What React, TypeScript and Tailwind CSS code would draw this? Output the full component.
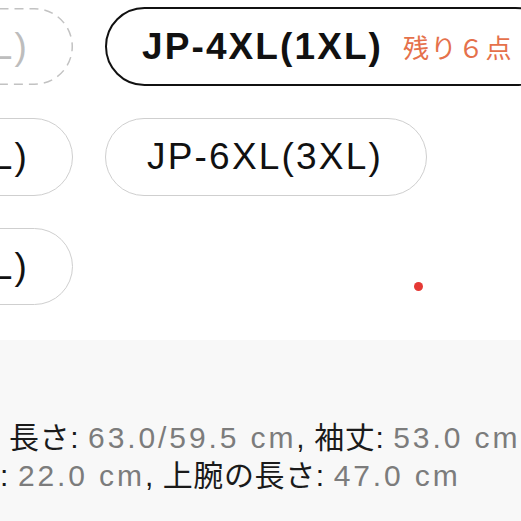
import React from "react";

const FONT = "font-['Liberation_Sans','Noto_Sans_CJK_JP',sans-serif]";

function Label({ children }: { children: React.ReactNode }) {
  return <span className="text-[#1a1a1a] tracking-[0.6px]">{children}</span>;
}
function Value({ children }: { children: React.ReactNode }) {
  return <span className="text-[#7c7c7c] tracking-[2.9px]">{children}</span>;
}

function DashedOutline() {
  return (
    <svg className="absolute inset-0 w-full h-full pointer-events-none" viewBox="0 0 322 77" preserveAspectRatio="none">
      <rect x="0.75" y="0.75" width="320.5" height="75.5" rx="37.75" ry="37.75" fill="none" stroke="#c2c2c2" strokeWidth="1.5" strokeDasharray="9 6" />
    </svg>
  );
}

export default function App() {
  return (
    <div className={`relative w-[521px] h-[521px] overflow-hidden bg-white ${FONT}`}>
      <div className="h-[340px] pt-[7px]">
        <div className="flex flex-col gap-[32px] ml-[-249px]">
          <div className="flex items-center gap-[32px]">
            <div className="relative w-[322px] h-[77px] shrink-0 rounded-full flex items-center justify-end pr-[44px] text-[37px] tracking-[2.2px] text-[#bdbdbd] whitespace-nowrap">
              <DashedOutline />
              JP-3XL(XL)
            </div>
            <div className="h-[79px] shrink-0 rounded-full border-[2.5px] border-[#111] flex items-center pl-[35px] pr-[40px] whitespace-nowrap">
              <span className="text-[37px] font-bold tracking-[2.1px] text-[#111]">JP-4XL(1XL)</span>
              <span className="ml-[20px] text-[26px] tracking-[1.5px] text-[#e5714b] font-['Noto_Sans_CJK_JP',sans-serif]">残り６点</span>
            </div>
          </div>
          <div className="flex items-center gap-[32px]">
            <div className="w-[322px] h-[78px] shrink-0 rounded-full border border-[#cfcfcf] flex items-center justify-end pr-[43px] text-[37px] tracking-[2.2px] text-[#111] whitespace-nowrap">
              JP-5XL(2XL)
            </div>
            <div className="w-[322px] h-[78px] shrink-0 rounded-full border border-[#cfcfcf] flex items-center pl-[41px] text-[37px] tracking-[2.2px] text-[#111] whitespace-nowrap">
              JP-6XL(3XL)
            </div>
          </div>
          <div className="flex items-center gap-[32px]">
            <div className="w-[322px] h-[77px] shrink-0 rounded-full border border-[#cfcfcf] flex items-center justify-end pr-[43px] text-[37px] tracking-[2.2px] text-[#111] whitespace-nowrap">
              JP-7XL(4XL)
            </div>
          </div>
        </div>
      </div>

      <div className="absolute left-[414px] top-[282px] w-[9px] h-[9px] rounded-full bg-[#e53935]" />

      <div className="h-[181px] bg-[#f8f8f8] pt-[79px] text-[30px] leading-[38px] whitespace-nowrap">
        <div className="pl-[9px]">
          <Label>長さ</Label>
          <Label>: </Label>
          <Value>63.0/59.5 cm</Value>
          <Label>, 袖丈: </Label>
          <Value>53.0 cm</Value>
        </div>
        <div className="pl-[0px]">
          <Label>: </Label>
          <Value>22.0 cm</Value>
          <Label>, 上腕の長さ: </Label>
          <Value>47.0 cm</Value>
        </div>
      </div>
    </div>
  );
}
